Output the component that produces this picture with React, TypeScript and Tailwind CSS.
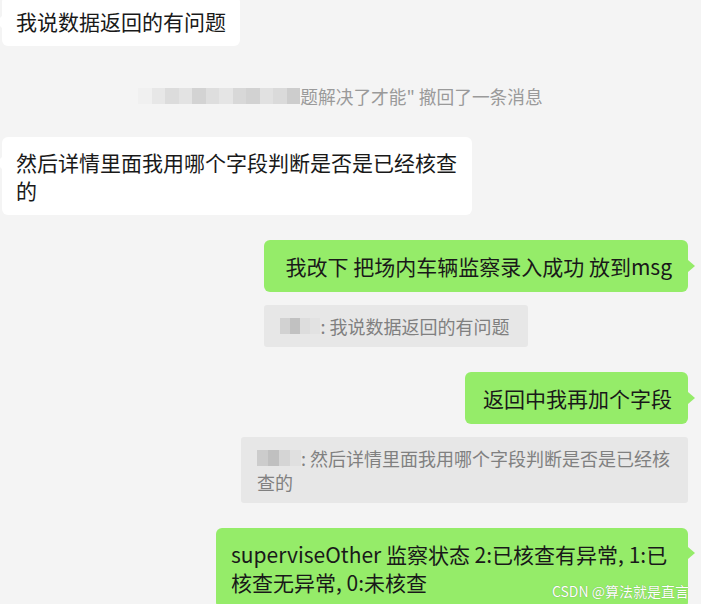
import React from 'react';

const font = { fontFamily: '"Noto Sans CJK SC", "Noto Sans", sans-serif' };

// pixelated name, blurred like the screenshot
const Blur = ({ w, tones }: { w: number; tones: string[] }) => (
  <span className="inline-flex align-middle h-[16px] blur-[0.6px] opacity-90" style={{ width: w }}>
    {tones.map((c, i) => (
      <span key={i} className="flex-1 h-full" style={{ backgroundColor: c }} />
    ))}
  </span>
);

const GreenBubble = ({
  children,
  tailTop = 20,
  className = 'pl-[18px]',
}: {
  children: React.ReactNode;
  tailTop?: number;
  className?: string;
}) => (
  <div
    className={`relative bg-[#95ec69] rounded-[6px] pr-[16px] py-[12px] text-[21px] leading-[28px] text-[#191919] whitespace-nowrap ${className}`}
  >
    {children}
    <span
      className="absolute left-full border-l-[7px] border-l-[#95ec69] border-y-[6px] border-y-transparent"
      style={{ top: tailTop }}
    />
  </div>
);

const WhiteBubble = ({ children, className = '' }: { children: React.ReactNode; className?: string }) => (
  <div
    className={`relative self-start ml-[2px] bg-white rounded-[6px] pl-[14px] pr-[14px] py-[11px] text-[21px] leading-[28px] text-[#191919] whitespace-nowrap ${className}`}
  >
    {children}
    <span className="absolute right-full top-[20px] border-r-[6px] border-r-white border-y-[6px] border-y-transparent" />
  </div>
);

const Quote = ({ children }: { children: React.ReactNode }) => (
  <div className="self-start mt-[13px] bg-[#e7e7e7] rounded-[3px] pl-[16px] pr-[18px] py-[9px] text-[18px] leading-[24px] text-[#808080] whitespace-nowrap">
    {children}
  </div>
);

export default function App() {
  return (
    <div className="w-[701px] h-[604px] overflow-hidden bg-[#f4f4f4] relative" style={font}>
      <div className="flex flex-col">
        <WhiteBubble className="mt-[-4px]">我说数据返回的有问题</WhiteBubble>

        <div className="mt-[38px] flex justify-center pr-[20px] text-[17.7px] leading-[24px] text-[#9a9a9a]">
          <span className="flex items-center">
            <Blur
              w={162}
              tones={['#f0f0f0', '#e6e6e6', '#dadada', '#e2e2e2', '#d0d0d0', '#dcdcdc', '#e4e4e4', '#d6d6d6', '#cfcfcf', '#e0e0e0', '#d8d8d8', '#c9c9c9']}
            />
            <span>题解决了才能" 撤回了一条消息</span>
          </span>
        </div>

        <WhiteBubble className="mt-[29px] w-[470px]">
          然后详情里面我用哪个字段判断是否是已经核查
          <br />的
        </WhiteBubble>

        <div className="mt-[25px] flex justify-end pr-[13px]">
          <div className="flex flex-col items-end">
            <GreenBubble className="pl-[21px]">我改下 把场内车辆监察录入成功 放到msg</GreenBubble>
            <Quote>
              <span className="inline-flex items-center">
                <Blur w={40} tones={['#d0d0d0', '#bdbdbd', '#dddddd', '#e2e2e2']} />
                <span>: 我说数据返回的有问题</span>
              </span>
            </Quote>
          </div>
        </div>

        <div className="mt-[25px] flex justify-end pr-[13px]">
          <div className="flex flex-col items-end">
            <GreenBubble>返回中我再加个字段</GreenBubble>
            <Quote>
              <span className="inline-flex items-center">
                <Blur w={44} tones={['#cacaca', '#bcbcbc', '#d4d4d4', '#e0e0e0']} />
                <span>: 然后详情里面我用哪个字段判断是否是已经核</span>
              </span>
              <br />查的
            </Quote>
          </div>
        </div>

        <div className="mt-[25px] flex justify-end pr-[13px]">
          <div className="w-[472px]">
            <GreenBubble tailTop={19}>
              <div className="-ml-[3px]">
                superviseOther 监察状态 2:已核查有异常, 1:已
                <br />
                核查无异常, 0:未核查
              </div>
            </GreenBubble>
          </div>
        </div>
      </div>

      <div className="absolute right-[12px] bottom-[4px] text-[14px] leading-[18px] text-white [text-shadow:0_0_1px_rgba(0,0,0,0.35)]">
        CSDN @算法就是直言
      </div>
    </div>
  );
}
